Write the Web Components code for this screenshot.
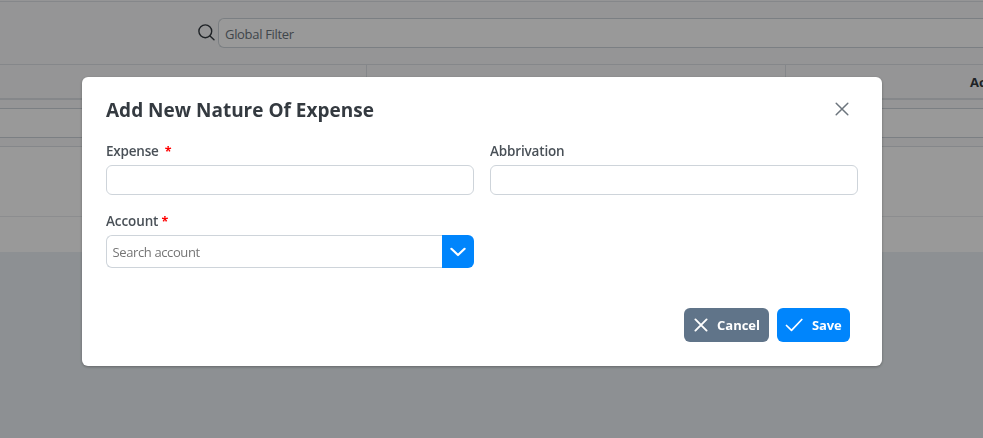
<!DOCTYPE html>
<html lang="en">
<head>
<meta charset="utf-8">
<title>Nature Of Expense</title>
<style>
html,body{margin:0;height:100%;overflow:hidden}
body{font-family:"Open Sans","Noto Sans",sans-serif;font-size:14px;background:#ebf1f5;color:#495057}
</style>
</head>
<body>
<expense-page></expense-page>
<modal-layer>
  <form-dialog>
    <span slot="title">Add New Nature Of Expense</span>
    <form-field><span slot="label">Expense</span><required-mark slot="label" style="margin-left:6px"></required-mark><text-box></text-box></form-field>
    <form-field><span slot="label" style="letter-spacing:-.16px">Abbrivation</span><text-box></text-box></form-field>
    <form-field><span slot="label" style="letter-spacing:-.1px">Account</span><required-mark slot="label" style="margin-left:3px"></required-mark><account-picker></account-picker></form-field>
    <action-button slot="actions" kind="cancel">Cancel</action-button>
    <action-button slot="actions" kind="save">Save</action-button>
  </form-dialog>
</modal-layer>
<script>
const make = (name, html) => customElements.define(name, class extends HTMLElement {
  constructor() {
    super();
    this.attachShadow({ mode: 'open' }).innerHTML = '<style>*{box-sizing:border-box}</style>' + html;
  }
});

make('expense-page', `<style>
:host{display:block;background:#fff;height:252px}
.rule{height:1px;background:#dee2e6}
.top{height:1px;background:#f8f9fa}
.bar{height:63px;background:#f8f9fa;border-bottom:1px solid #dee2e6;padding:16px 0 0 198px;display:flex;gap:3px}
.bar svg{margin-top:6px;flex:none}
.search{flex:1;height:30px;border:1px solid #ced4da;border-right:0;border-radius:6px 0 0 6px;background:#fff;padding:0 6px;line-height:30px;font-size:13px;color:#6c757d;letter-spacing:-.32px}
.head{height:35px;background:#f8f9fa;border-bottom:2px solid #dee2e6;display:grid;grid-template-columns:367px 419px 1fr}
.head div{border-right:1px solid #dee2e6}
.head div:last-child{border:0;padding-left:184px;line-height:35px;font-size:13px;font-weight:700;color:#343a40;white-space:nowrap;overflow:hidden}
.filter{height:47px;background:#f8f9fa;border-bottom:1px solid #dee2e6;padding-top:8px}
.filter div{height:30px;background:#fff;border:1px solid #ced4da;border-width:1px 0}
.row{height:70px;border-bottom:1px solid #e9ecef}
</style>
<div class="top"></div><div class="rule"></div>
<div class="bar"><svg width="17" height="17" viewBox="0 0 17 17" fill="none" stroke="#343a40" stroke-width="1.4" stroke-linecap="round"><circle cx="7.3" cy="7.3" r="6.4"/><path d="M12 12l4 3.8"/></svg><div class="search">Global Filter</div></div>
<div class="head"><div></div><div></div><div>Account</div></div>
<div class="filter"><div></div></div>
<div class="row"></div>`);

make('modal-layer', `<style>
:host{position:fixed;inset:0;display:flex;align-items:flex-start;padding:77px 0 0 82px;background:rgba(0,0,0,.4)}
</style><slot></slot>`);

make('form-dialog', `<style>
:host{display:flex;flex-direction:column;width:800px;height:289px;box-sizing:border-box;background:#fff;border-radius:6px;padding:0 24px 24px;box-shadow:0 1px 3px rgba(0,0,0,.3)}
header{height:64px;display:flex;justify-content:space-between;align-items:center;padding-right:9px;color:#343a40}
h2{margin:2px 0 0;font-size:19px;line-height:28px;font-weight:700;white-space:nowrap}
.grid{display:grid;grid-template-columns:368px 368px;gap:16px;align-items:start}
footer{margin-top:auto;display:flex;justify-content:flex-end;gap:8px;padding-right:8px}
</style>
<header><h2><slot name="title"></slot></h2><svg width="14" height="14" viewBox="0 0 14 14" stroke="#6c757d" stroke-width="1.5" stroke-linecap="round"><path d="M1.2 1.2l11.6 11.6M12.8 1.2L1.2 12.8"/></svg></header>
<div class="grid"><slot></slot></div>
<footer><slot name="actions"></slot></footer>`);

make('form-field', `<style>
:host{display:block}
label{display:flex;height:24px;line-height:21px;font-size:13.5px;font-weight:600;letter-spacing:-.2px;color:#495057}
</style><label><slot name="label"></slot></label><slot></slot>`);

make('required-mark', `<style>:host{display:block;color:red;font-size:12.5px;font-weight:700}</style>*`);

make('text-box', `<style>:host{display:block;box-sizing:border-box;height:30px;border:1px solid #ced4da;border-radius:6px;background:#fff}</style>`);

make('account-picker', `<style>
:host{display:flex;height:33px}
.text{flex:1;border:1px solid #ced4da;border-right-width:0;border-radius:6px 0 0 6px;padding-left:5.5px;font-size:13px;letter-spacing:-.38px;line-height:33px;color:#757575}
.drop{width:32px;background:#0085fc;border-radius:0 6px 6px 0;display:grid;place-items:center}
</style><div class="text">Search account</div><div class="drop"><svg width="16" height="10" viewBox="0 0 16 10" fill="none" stroke="#fff" stroke-width="2.2" stroke-linecap="round" stroke-linejoin="round"><path d="M1.4 1.8L8 8l6.6-6.2"/></svg></div>`);

customElements.define('action-button', class extends HTMLElement {
  connectedCallback() {
    const save = this.getAttribute('kind') === 'save';
    this.attachShadow({ mode: 'open' }).innerHTML = `<style>
:host{display:flex;box-sizing:border-box;align-items:center;width:${save ? 73 : 85}px;height:34px;border-radius:6px;background:${save ? '#0085fc' : '#607489'};color:#fff;font-family:"Open Sans",sans-serif;font-size:13px;font-weight:700;letter-spacing:${save ? -.15 : 0}px;line-height:34px;padding-left:${save ? 8 : 10}px}
svg{flex:none;margin-right:9px}
</style>${save
  ? '<svg width="18" height="14" viewBox="0 0 18 14" fill="none" stroke="#fff" stroke-width="1.7" stroke-linecap="round" stroke-linejoin="round"><path d="M1.5 7.5L6.5 12.3L16.8 1.5"/></svg>'
  : '<svg width="14" height="14" viewBox="0 0 14 14" stroke="#fff" stroke-width="1.9" stroke-linecap="round"><path d="M1.4 1.4l11.2 11.2M12.6 1.4L1.4 12.6"/></svg>'}<slot></slot>`;
  }
});
</script>
</body>
</html>
